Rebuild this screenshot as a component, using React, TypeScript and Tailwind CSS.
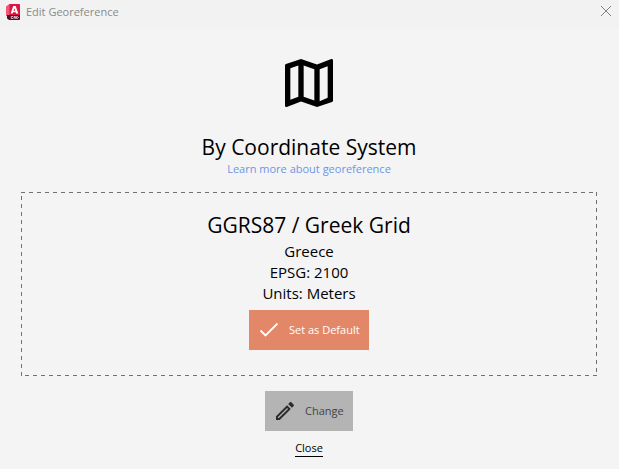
import React from 'react';

const details = ['Greece', 'EPSG: 2100', 'Units: Meters'];

function AppLogo() {
  return (
    <svg className="h-4 w-4" viewBox="0 0 16 16" aria-hidden="true">
      <path d="M3.500 0H13a1 1 0 0 1 1 1v11H2V1.500z" fill="#e0123f" />
      <path d="M0 2.500L3.500 0v12H0z" fill="#f0557a" />
      <path d="M1 11h13v4a1 1 0 0 1-1 1H3l-2-1.500z" fill="#5e0a20" />
      <path d="M7.200 2h2.500l2.600 7.500h-2.200l-.4-1.300H7.100l-.4 1.300H4.600zM8.400 4.300l-.8 2.400h1.600z" fill="#fff" />
      <path d="M7 12.500H5.200v2H7M8 14.800v-2.300h1.400v2.300M8 13.700h1.400M10.500 12.500h1l.7.500v1l-.7.500h-1z" fill="none" stroke="#f3dde3" strokeWidth="0.8" />
    </svg>
  );
}

function MapIcon() {
  return (
    <svg className="h-16 w-16" viewBox="0 0 24 24" fill="currentColor" aria-hidden="true">
      <path d="M20.5 3l-.16.03L15 5.1 9 3 3.360 4.900c-.21.07-.36.25-.36.48V20.500a.5.5 0 0 0 .5.5l.16-.03L9 18.900l6 2.100 5.640-1.900c.21-.07.36-.25.36-.48V3.500a.5.5 0 0 0-.5-.5zM10 5.470l4 1.400v11.660l-4-1.400zM5 6.460l3-1.010v11.700l-3 1.160zm14 11.080l-3 1.320V6.860l3-1.160z" />
    </svg>
  );
}

function PencilIcon() {
  return (
    <svg className="h-6 w-6" viewBox="0 0 24 24" fill="currentColor" aria-hidden="true">
      <path d="M14.060 9l.94.94L5.920 19H5v-.92zM17.660 3c-.25 0-.51.1-.7.290l-1.830 1.830 3.750 3.750 1.830-1.830c.39-.39.39-1.040 0-1.410l-2.340-2.340c-.2-.2-.45-.29-.71-.29zm-3.600 3.190L3 17.250V21h3.750L17.810 9.940z" />
    </svg>
  );
}

function CheckIcon() {
  return (
    <svg className="h-6 w-6" viewBox="0 0 24 24" fill="none" stroke="currentColor" strokeWidth="1.8" aria-hidden="true">
      <path d="M3.500 12.500l5 5L20.500 5.500" />
    </svg>
  );
}

export default function App() {
  return (
    <div className="min-h-screen bg-[#f4f4f4] font-['Open_Sans','Noto_Sans',sans-serif] text-black">
      <header className="flex h-7 items-start justify-between bg-[#f2f2f2] pr-1 pl-1.5">
        <div className="flex items-center gap-1 pt-0.5">
          <AppLogo />
          <h1 className="text-[11px] leading-5 text-[#8a8a8a]">Edit Georeference</h1>
        </div>
        <button type="button" aria-label="Close window" className="p-1 pt-1.5 text-[#808080]">
          <svg className="h-2.5 w-2.5" viewBox="0 0 10 10" fill="none" stroke="currentColor" aria-hidden="true">
            <path d="M0 0l10 10M10 0L0 10" />
          </svg>
        </button>
      </header>

      <main className="flex flex-col items-center pt-[23px] pr-[22px] pl-[21px]">
        <MapIcon />
        <h2 className="mt-4 text-[21px] leading-8">By Coordinate System</h2>
        <a href="#georeference" className="text-[11px] leading-3 text-[#6c95ea]">
          Learn more about georeference
        </a>

        <section className="relative mt-[17px] flex w-full flex-col items-center pt-[17px] pb-[26px]">
          <svg className="pointer-events-none absolute inset-0 h-full w-full" aria-hidden="true">
            <rect width="100%" height="100%" fill="none" stroke="#707070" strokeWidth="2" strokeDasharray="4 4" />
          </svg>
          <h3 className="text-[21px] leading-8">GGRS87 / Greek Grid</h3>
          {details.map((line) => (
            <p key={line} className="text-[15px] leading-[21px]">{line}</p>
          ))}
          <button type="button" className="mt-1.5 flex h-10 min-w-[120px] items-center gap-2 bg-[#e28868] px-2 text-[11px] text-white">
            <CheckIcon />
            Set as Default
          </button>
        </section>

        <button type="button" className="mt-[15px] flex h-10 min-w-[88px] items-center gap-2 bg-[#b4b4b4] px-2 text-[11px] text-[#444]">
          <span className="text-[#2b2b2b]"><PencilIcon /></span>
          Change
        </button>
        <button type="button" className="mt-2 border-b border-black text-[11px] leading-[17px]">
          Close
        </button>
      </main>
    </div>
  );
}
